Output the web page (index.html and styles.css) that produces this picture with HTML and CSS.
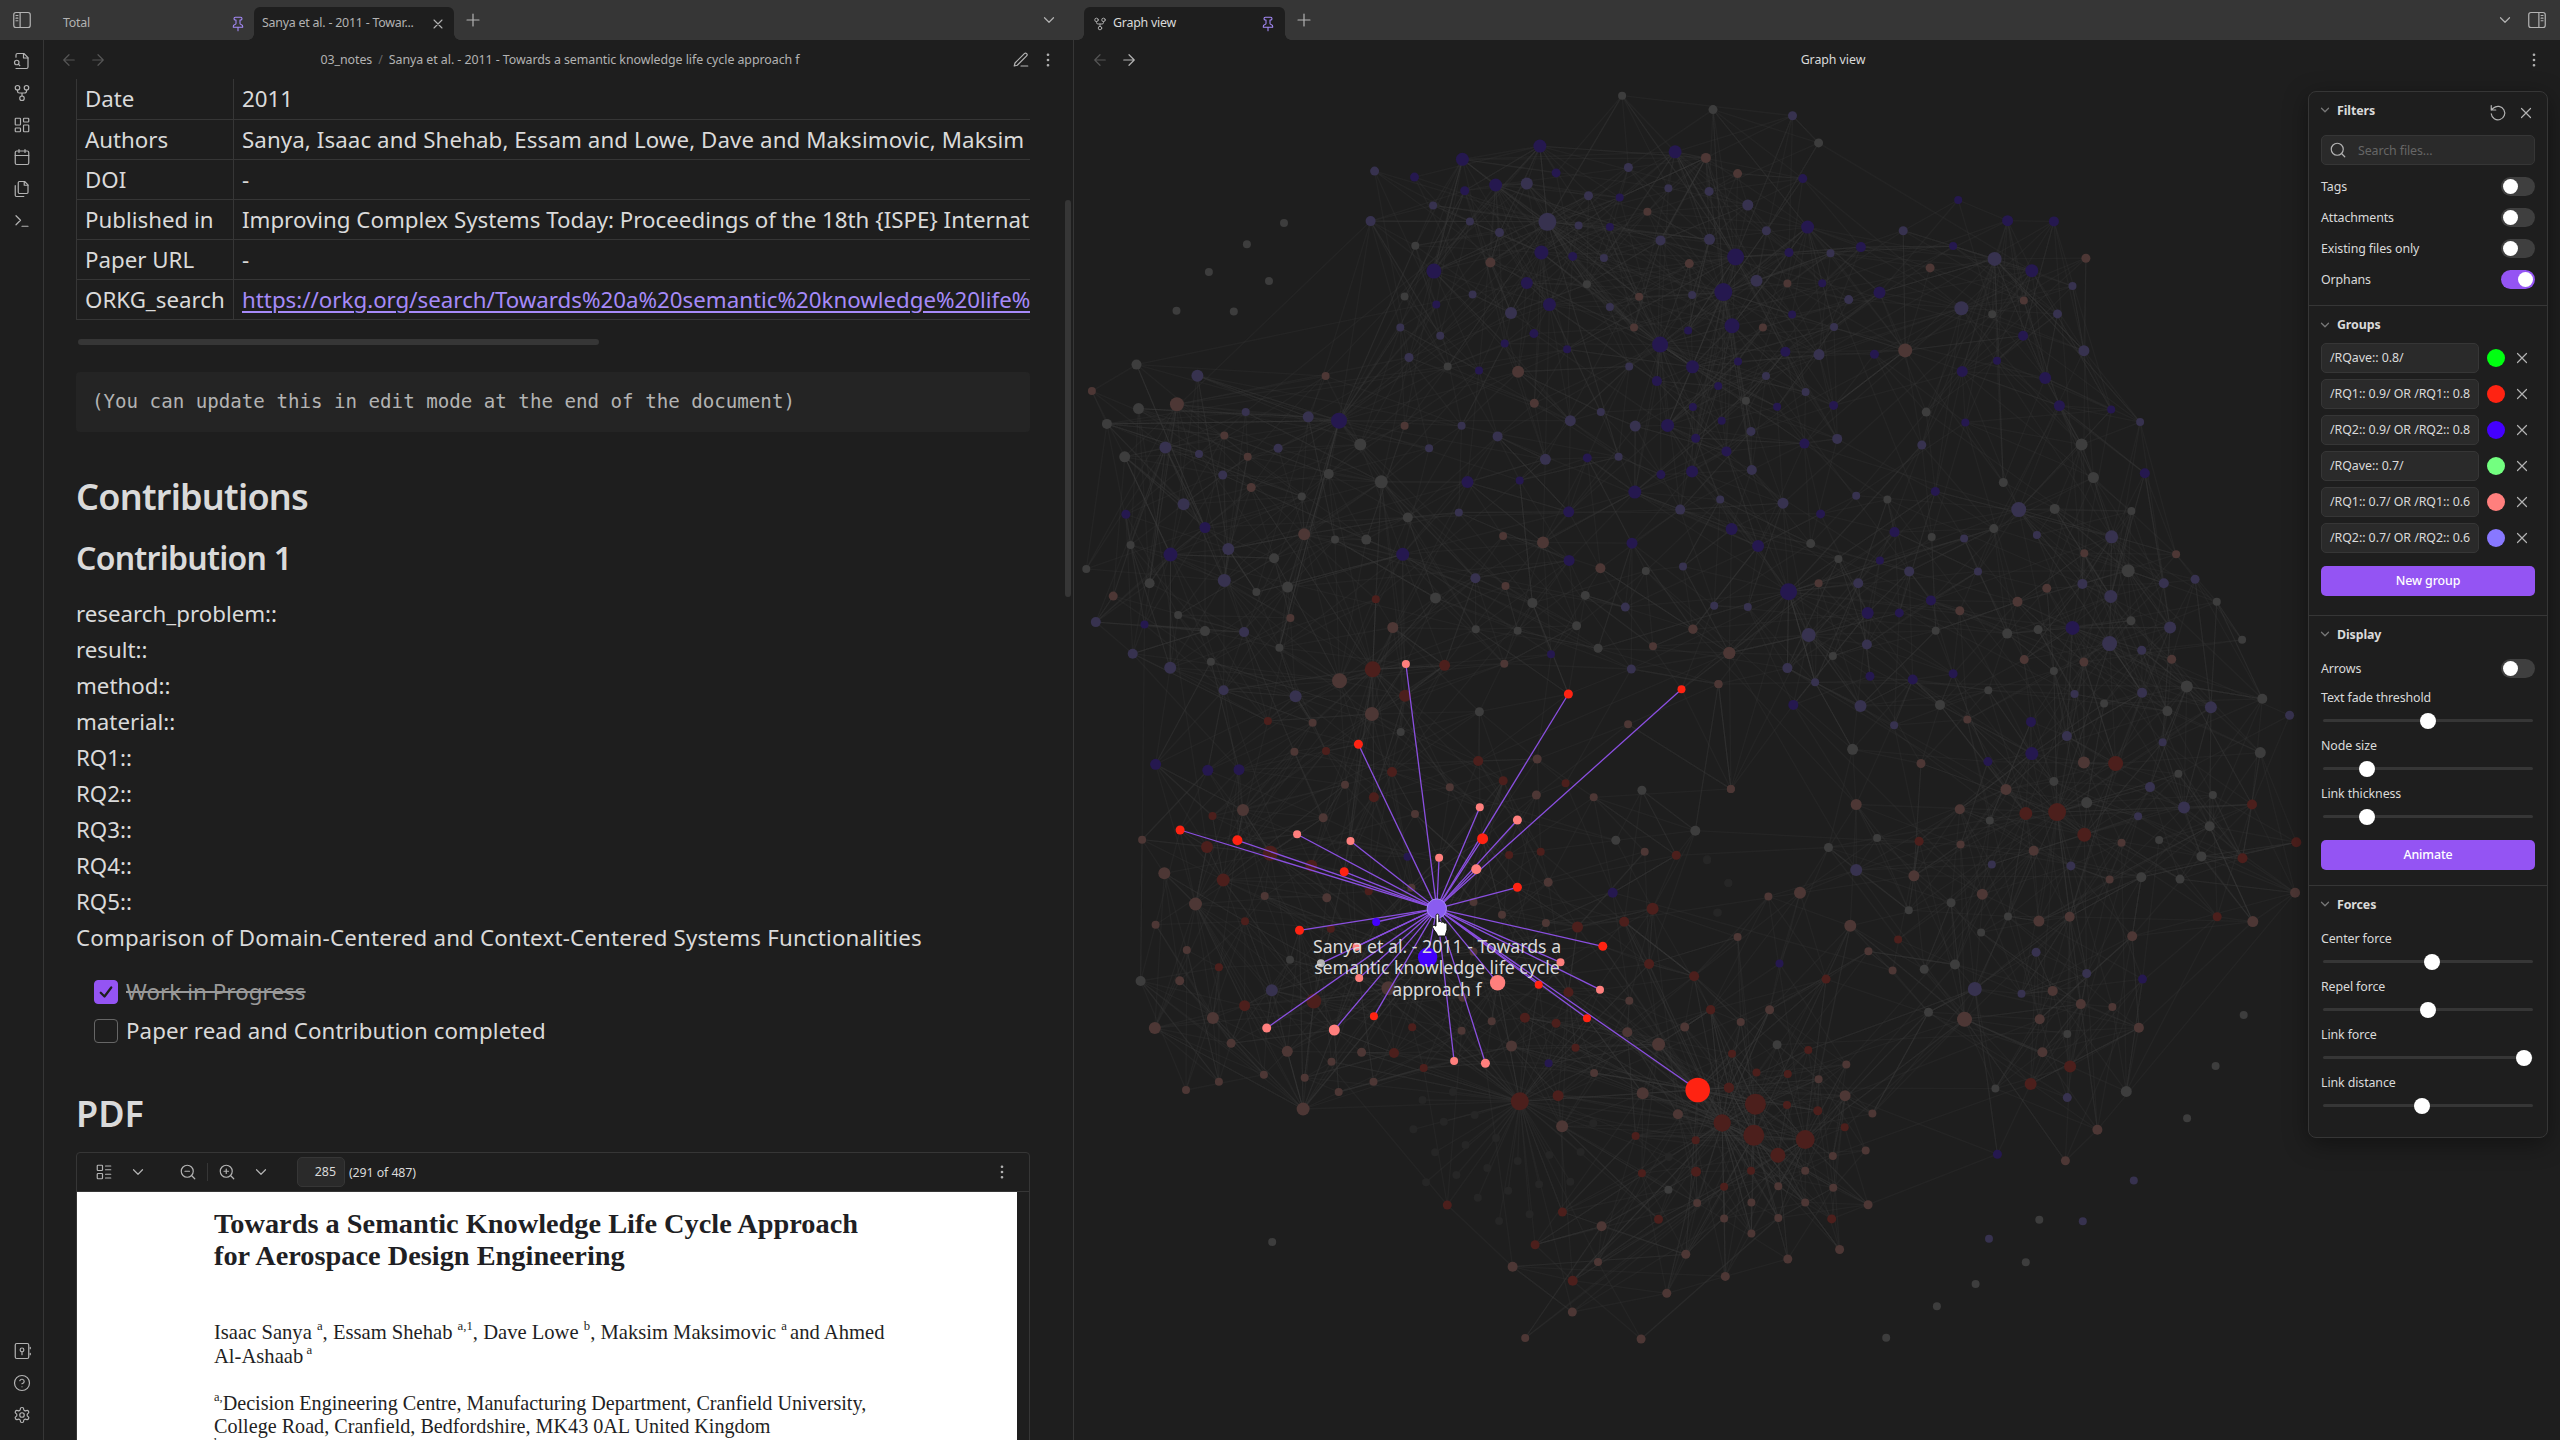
FILE: index.html
```
<!DOCTYPE html>
<html lang="en">
<head>
<meta charset="utf-8">
<title>Graph view</title>
<link rel="stylesheet" href="styles.css">
</head>
<body>
<svg class="sprite" width="0" height="0">
  <symbol id="i-left" viewBox="0 0 24 24"><rect x="1" y="2" width="22" height="20" rx="3"/><path d="M9.500 2v20M4 6h2.500M4 9.500h2.500M4 13h2.500"/></symbol>
  <symbol id="i-right" viewBox="0 0 24 24"><rect x="1" y="2" width="22" height="20" rx="3"/><path d="M14.500 2v20M17.500 6H20M17.500 9.500H20M17.500 13H20"/></symbol>
  <symbol id="i-filesearch" viewBox="0 0 24 24"><path d="M4 22h14a2 2 0 0 0 2-2V7.500L14.500 2H6a2 2 0 0 0-2 2v3"/><path d="M14 2v6h6M9 18l-1.500-1.500"/><circle cx="5" cy="14" r="3"/></symbol>
  <symbol id="i-fork" viewBox="0 0 24 24"><circle cx="12" cy="19" r="3"/><circle cx="6" cy="5" r="3"/><circle cx="18" cy="5" r="3"/><path d="M18 8v1.500a2.500 2.500 0 0 1-2.500 2.500h-7A2.500 2.500 0 0 1 6 9.500V8M12 12v4"/></symbol>
  <symbol id="i-dash" viewBox="0 0 24 24"><rect x="3" y="3" width="7" height="9" rx="1"/><rect x="14" y="3" width="7" height="5" rx="1"/><rect x="14" y="12" width="7" height="9" rx="1"/><rect x="3" y="16" width="7" height="5" rx="1"/></symbol>
  <symbol id="i-cal" viewBox="0 0 24 24"><rect x="3" y="4" width="18" height="18" rx="2"/><path d="M16 2v4M8 2v4M3 10h18"/></symbol>
  <symbol id="i-files" viewBox="0 0 24 24"><path d="M15.500 2H8.600C7.700 2 7 2.700 7 3.600v12.800c0 .9.7 1.600 1.600 1.600h9.800c.9 0 1.600-.7 1.600-1.600V6.500L15.500 2z"/><path d="M3 7.600v12.800c0 .9.7 1.600 1.600 1.600h9.800M15 2v5h5"/></symbol>
  <symbol id="i-term" viewBox="0 0 24 24"><path d="M4 17l6-6-6-6M12 19h8"/></symbol>
  <symbol id="i-vault" viewBox="0 0 24 24"><rect x="3" y="2" width="18" height="20" rx="2"/><circle cx="12" cy="10.500" r="2.500"/><path d="M12 13v4M23 7v2M23 15v2"/></symbol>
  <symbol id="i-help" viewBox="0 0 24 24"><circle cx="12" cy="12" r="10"/><path d="M9.090 9a3 3 0 0 1 5.830 1c0 2-3 3-3 3M12 17h.01"/></symbol>
  <symbol id="i-gear" viewBox="0 0 24 24"><path d="M12.220 2h-.44a2 2 0 0 0-2 2v.18a2 2 0 0 1-1 1.730l-.43.25a2 2 0 0 1-2 0l-.15-.08a2 2 0 0 0-2.730.73l-.22.38a2 2 0 0 0 .73 2.730l.15.1a2 2 0 0 1 1 1.720v.51a2 2 0 0 1-1 1.740l-.15.09a2 2 0 0 0-.73 2.730l.22.38a2 2 0 0 0 2.730.73l.15-.08a2 2 0 0 1 2 0l.43.25a2 2 0 0 1 1 1.730V20a2 2 0 0 0 2 2h.44a2 2 0 0 0 2-2v-.18a2 2 0 0 1 1-1.730l.43-.25a2 2 0 0 1 2 0l.15.08a2 2 0 0 0 2.730-.73l.22-.39a2 2 0 0 0-.73-2.730l-.15-.08a2 2 0 0 1-1-1.740v-.5a2 2 0 0 1 1-1.740l.15-.09a2 2 0 0 0 .73-2.730l-.22-.38a2 2 0 0 0-2.730-.73l-.15.08a2 2 0 0 1-2 0l-.43-.25a2 2 0 0 1-1-1.730V4a2 2 0 0 0-2-2z"/><circle cx="12" cy="12" r="3"/></symbol>
  <symbol id="i-pin" viewBox="0 0 24 24"><path d="M12 17v5M5 17h14v-1.760a2 2 0 0 0-1.110-1.790l-1.780-.9A2 2 0 0 1 15 10.760V6h1a2 2 0 0 0 0-4H8a2 2 0 0 0 0 4h1v4.760a2 2 0 0 1-1.110 1.790l-1.780.9A2 2 0 0 0 5 15.240Z"/></symbol>
  <symbol id="i-x" viewBox="0 0 24 24"><path d="M18 6L6 18M6 6l12 12"/></symbol>
  <symbol id="i-plus" viewBox="0 0 24 24"><path d="M12 4v16M4 12h16"/></symbol>
  <symbol id="i-chev" viewBox="0 0 24 24"><path d="M6 9l6 6 6-6"/></symbol>
  <symbol id="i-back" viewBox="0 0 24 24"><path d="M19 12H5M12 19l-7-7 7-7"/></symbol>
  <symbol id="i-fwd" viewBox="0 0 24 24"><path d="M5 12h14M12 5l7 7-7 7"/></symbol>
  <symbol id="i-edit" viewBox="0 0 24 24"><path d="M12 20h9M16.500 3.500a2.120 2.120 0 0 1 3 3L7 19l-4 1 1-4Z"/></symbol>
  <symbol id="i-dots" viewBox="0 0 24 24"><circle cx="12" cy="5" r="1"/><circle cx="12" cy="12" r="1"/><circle cx="12" cy="19" r="1"/></symbol>
  <symbol id="i-reset" viewBox="0 0 24 24"><path d="M3 2v6h6M3 13a9 9 0 1 0 3-7.700L3 8"/></symbol>
  <symbol id="i-search" viewBox="0 0 24 24"><circle cx="11" cy="11" r="8"/><path d="M21 21l-4.300-4.300"/></symbol>
  <symbol id="i-zoomin" viewBox="0 0 24 24"><circle cx="11" cy="11" r="8"/><path d="M21 21l-4.300-4.300M11 8v6M8 11h6"/></symbol>
  <symbol id="i-zoomout" viewBox="0 0 24 24"><circle cx="11" cy="11" r="8"/><path d="M21 21l-4.300-4.300M8 11h6"/></symbol>
  <symbol id="i-list" viewBox="0 0 24 24"><rect x="3" y="3" width="7" height="7" rx="1"/><rect x="3" y="14" width="7" height="7" rx="1"/><path d="M14 4h7M14 9h7M14 15h7M14 20h7"/></symbol>
  <symbol id="i-check" viewBox="0 0 24 24"><path d="M5 13l5 5L19 6"/></symbol>
</svg>

<header class="titlebar">
  <div class="tabs tabs-left">
    <div class="corner"><svg class="ic s18"><use href="#i-left"/></svg></div>
    <div class="tab tab-first"><span>Total</span><svg class="ic s16 accent"><use href="#i-pin"/></svg></div>
    <div class="tab active"><span>Sanya et al. - 2011 - Towar...</span><svg class="ic s16"><use href="#i-x"/></svg></div>
    <svg class="ic s18 plus"><use href="#i-plus"/></svg>
    <svg class="ic s18 tab-menu"><use href="#i-chev"/></svg>
  </div>
  <div class="tabs tabs-right">
    <div class="tab active graph-tab"><svg class="ic s14"><use href="#i-fork"/></svg><span class="bright">Graph view</span><svg class="ic s16 accent"><use href="#i-pin"/></svg></div>
    <svg class="ic s18 plus"><use href="#i-plus"/></svg>
    <svg class="ic s18 tab-menu"><use href="#i-chev"/></svg>
    <svg class="ic s18"><use href="#i-right"/></svg>
  </div>
</header>

<div class="workspace">
  <nav class="ribbon">
    <svg class="ic s18"><use href="#i-filesearch"/></svg>
    <svg class="ic s18"><use href="#i-fork"/></svg>
    <svg class="ic s18"><use href="#i-dash"/></svg>
    <svg class="ic s18"><use href="#i-cal"/></svg>
    <svg class="ic s18"><use href="#i-files"/></svg>
    <svg class="ic s18"><use href="#i-term"/></svg>
    <div class="spacer"></div>
    <svg class="ic s18"><use href="#i-vault"/></svg>
    <svg class="ic s18"><use href="#i-help"/></svg>
    <svg class="ic s18"><use href="#i-gear"/></svg>
  </nav>

  <section class="pane note-pane">
    <div class="view-header">
      <div class="nav"><svg class="ic s18 dim"><use href="#i-back"/></svg><svg class="ic s18 dim"><use href="#i-fwd"/></svg></div>
      <div class="crumbs"><span>03_notes</span><span class="slash">/</span><span>Sanya et al. - 2011 - Towards a semantic knowledge life cycle approach f</span></div>
      <div class="actions"><svg class="ic s18"><use href="#i-edit"/></svg><svg class="ic s18"><use href="#i-dots"/></svg></div>
    </div>
    <div class="note">
      <div class="table-wrap">
        <table class="meta">
          <tr><td>Date</td><td>2011</td></tr>
          <tr><td>Authors</td><td class="authors">Sanya, Isaac and Shehab, Essam and Lowe, Dave and Maksimovic, Maksim and Al-Ashaab, Ahmed</td></tr>
          <tr><td>DOI</td><td>-</td></tr>
          <tr><td>Published in</td><td>Improving Complex Systems Today: Proceedings of the 18th {ISPE} International Conference</td></tr>
          <tr><td>Paper URL</td><td>-</td></tr>
          <tr><td>ORKG_search</td><td><a>https://orkg.org/search/Towards%20a%20semantic%20knowledge%20life%20cycle</a></td></tr>
        </table>
      </div>
      <div class="hscroll"></div>
      <pre class="code">(You can update this in edit mode at the end of the document)</pre>
      <h1 class="h-contribs">Contributions</h1>
      <h2 class="h-contrib">Contribution 1</h2>
      <div class="fields">
        <div>research_problem::</div><div>result::</div><div>method::</div><div>material::</div>
        <div>RQ1::</div><div>RQ2::</div><div>RQ3::</div><div>RQ4::</div><div>RQ5::</div>
        <div class="comparison">Comparison of Domain-Centered and Context-Centered Systems Functionalities</div>
      </div>
      <div class="tasks">
        <div class="task done"><span class="box checked"><svg class="ic s18 tick"><use href="#i-check"/></svg></span><s>Work in Progress</s></div>
        <div class="task"><span class="box"></span><span>Paper read and Contribution completed</span></div>
      </div>
      <h1 class="h-pdf">PDF</h1>
      <div class="pdf">
        <div class="pdf-bar">
          <svg class="ic s18 b1"><use href="#i-list"/></svg>
          <svg class="ic s18 b2"><use href="#i-chev"/></svg>
          <svg class="ic s18 b3"><use href="#i-zoomout"/></svg>
          <span class="sep"></span>
          <svg class="ic s18 b4"><use href="#i-zoomin"/></svg>
          <svg class="ic s18 b5"><use href="#i-chev"/></svg>
          <span class="page-no">285</span>
          <span class="page-of">(291 of 487)</span>
          <svg class="ic s18 b6"><use href="#i-dots"/></svg>
        </div>
        <div class="sheet">
          <div class="sheet-title">Towards a Semantic Knowledge Life Cycle Approach<br>for Aerospace Design Engineering</div>
          <div class="sheet-authors">Isaac Sanya <sup>a</sup>, Essam Shehab <sup>a,1</sup>, Dave Lowe <sup>b</sup>, Maksim Maksimovic <sup>a </sup>and Ahmed<br>Al-Ashaab<sup> a</sup></div>
          <div class="sheet-affil"><sup>a,</sup>Decision Engineering Centre, Manufacturing Department, Cranfield University,<br>College Road, Cranfield, Bedfordshire, MK43 0AL United Kingdom<br><sup>b</sup></div>
        </div>
      </div>
      <div class="vscroll"></div>
    </div>
  </section>

  <section class="pane graph-pane">
    <div class="view-header">
      <div class="nav"><svg class="ic s18 dim"><use href="#i-back"/></svg><svg class="ic s18"><use href="#i-fwd"/></svg></div>
      <div class="crumbs title">Graph view</div>
      <div class="actions"><svg class="ic s18"><use href="#i-dots"/></svg></div>
    </div>
    <svg class="graph" id="graph" viewBox="1074 80 1486 1360"></svg>
    <div class="node-label">Sanya et al. - 2011 - Towards a<br>semantic knowledge life cycle<br>approach f</div>
    <svg class="cursor" viewBox="0 0 18 24"><path d="M5 13V2.500C5 .6 7.800.6 7.800 2.500V9c.6-1 2.600-.8 2.800.4.8-.8 2.500-.4 2.700.8 1-.6 2.700 0 2.700 1.600v4.700c0 2-1.500 3-1.500 6.500H6.500C6.500 20 3 18 1.600 14.300 1 12.600 3.200 11.600 4.200 13z" fill="#fff" stroke="#111"/></svg>

    <aside class="controls">
      <section class="group g-filters">
        <div class="g-head"><svg class="ic s14 dim2"><use href="#i-chev"/></svg><b>Filters</b><span class="grow"></span><svg class="ic s18 reset"><use href="#i-reset"/></svg><svg class="ic s18 close"><use href="#i-x"/></svg></div>
        <div class="search"><svg class="ic s18"><use href="#i-search"/></svg><span>Search files...</span></div>
        <div class="opt"><span>Tags</span><i class="toggle"></i></div>
        <div class="opt"><span>Attachments</span><i class="toggle"></i></div>
        <div class="opt"><span>Existing files only</span><i class="toggle"></i></div>
        <div class="opt"><span>Orphans</span><i class="toggle on"></i></div>
      </section>
      <section class="group g-groups">
        <div class="g-head"><svg class="ic s14 dim2"><use href="#i-chev"/></svg><b>Groups</b></div>
        <div class="query"><span class="field">/RQave:: 0.8/</span><i class="dot lime"></i><svg class="ic s18"><use href="#i-x"/></svg></div>
        <div class="query"><span class="field">/RQ1:: 0.9/ OR /RQ1:: 0.8</span><i class="dot red"></i><svg class="ic s18"><use href="#i-x"/></svg></div>
        <div class="query"><span class="field">/RQ2:: 0.9/ OR /RQ2:: 0.8</span><i class="dot blue"></i><svg class="ic s18"><use href="#i-x"/></svg></div>
        <div class="query"><span class="field">/RQave:: 0.7/</span><i class="dot mint"></i><svg class="ic s18"><use href="#i-x"/></svg></div>
        <div class="query"><span class="field">/RQ1:: 0.7/ OR /RQ1:: 0.6</span><i class="dot pink"></i><svg class="ic s18"><use href="#i-x"/></svg></div>
        <div class="query"><span class="field">/RQ2:: 0.7/ OR /RQ2:: 0.6</span><i class="dot lilac"></i><svg class="ic s18"><use href="#i-x"/></svg></div>
        <div class="btn">New group</div>
      </section>
      <section class="group g-display">
        <div class="g-head"><svg class="ic s14 dim2"><use href="#i-chev"/></svg><b>Display</b></div>
        <div class="opt"><span>Arrows</span><i class="toggle"></i></div>
        <div class="slider"><span>Text fade threshold</span><div class="track"><i style="left:105px"></i></div></div>
        <div class="slider"><span>Node size</span><div class="track"><i style="left:44px"></i></div></div>
        <div class="slider"><span>Link thickness</span><div class="track"><i style="left:44px"></i></div></div>
        <div class="btn">Animate</div>
      </section>
      <section class="group g-forces">
        <div class="g-head"><svg class="ic s14 dim2"><use href="#i-chev"/></svg><b>Forces</b></div>
        <div class="slider"><span>Center force</span><div class="track"><i style="left:109px"></i></div></div>
        <div class="slider"><span>Repel force</span><div class="track"><i style="left:105px"></i></div></div>
        <div class="slider"><span>Link force</span><div class="track"><i style="left:201px"></i></div></div>
        <div class="slider"><span>Link distance</span><div class="track"><i style="left:99px"></i></div></div>
      </section>
    </aside>
  </section>
</div>
<script src="graph.js"></script>
</body>
</html>
```
FILE: styles.css
```
* { box-sizing: border-box; }
body {
  margin: 0; width: 2560px; height: 1440px; overflow: hidden;
  background: #1e1e1e; color: #dadada;
  font-family: "Noto Sans", "Open Sans", sans-serif; font-size: 12.4px;
  display: flex; flex-direction: column;
}
.sprite { position: absolute; }
.ic { fill: none; stroke: #b3b3b3; stroke-width: 1.6; stroke-linecap: round; stroke-linejoin: round; flex: none; display: block; }
.s14 { width: 14px; height: 14px; }
.s16 { width: 16px; height: 16px; }
.s18 { width: 18px; height: 18px; }
.dim { stroke: #555; }
.dim2 { stroke: #777; stroke-width: 2.2; }
.accent { stroke: #a68af9; }
.spacer, .grow { flex: 1; }

/* tab bar */
.titlebar { height: 40px; flex: none; background: #363636; display: flex; }
.tabs { display: flex; align-items: center; }
.tabs-left { width: 1074px; padding-right: 16px; }
.tabs-right { flex: 1; padding: 0 14px 0 10px; }
.corner { width: 44px; display: flex; justify-content: center; }
.tab { position: relative; width: 200px; height: 33px; margin-top: 7px; padding: 0 8px; display: flex; align-items: center; justify-content: space-between; color: #b3b3b3; white-space: nowrap; }
.tab span { padding-bottom: 2px; letter-spacing: -0.220px; }
.tab-first { width: 210px; padding: 0 8px 0 19px; }
.tab.active { background: #1e1e1e; border-radius: 6px 6px 0 0; }
.tab.active::before, .tab.active::after { content: ""; position: absolute; bottom: 0; width: 6px; height: 6px; }
.tab.active::before { left: -6px; background: radial-gradient(circle at 0 0, transparent 5.500px, #1e1e1e 6px); }
.tab.active::after { right: -6px; background: radial-gradient(circle at 100% 0, transparent 5.500px, #1e1e1e 6px); }
.graph-tab { width: 201px; padding: 0 9px; }
.graph-tab span { flex: 1; margin-left: 6px; }
.bright { color: #dadada; }
.plus { margin-left: 10px; }
.tab-menu { margin-left: auto; }
.tabs-right .tab-menu { margin-right: 14px; }

.workspace { flex: 1; display: flex; min-height: 0; }
.ribbon { width: 44px; border-right: 1px solid #363636; padding: 12px 0 16px; display: flex; flex-direction: column; align-items: center; gap: 14px; }
.pane { position: relative; display: flex; flex-direction: column; min-height: 0; }
.note-pane { width: 1030px; border-right: 1px solid #363636; }
.graph-pane { flex: 1; }
.view-header { height: 39px; flex: none; display: grid; grid-template-columns: 91px 1fr 88px; align-items: center; padding: 0 16px; }
.graph-pane .view-header { grid-template-columns: 90px 1fr 58px; padding: 0 17px; }
.nav { display: flex; gap: 11px; }
.actions { display: flex; gap: 9px; justify-content: flex-end; }
.crumbs { text-align: center; color: #b3b3b3; letter-spacing: -0.060px; }
.slash { color: #666; margin: 0 6px; }
.title { color: #dadada; }

/* note */
.note { position: relative; flex: 1; min-height: 0; overflow: hidden; padding-left: 32px; font-size: 22.3px; display: flex; flex-direction: column; }
.note > * { flex: none; width: 954px; }
.table-wrap { overflow: hidden; height: 241px; }
.meta { border-collapse: collapse; table-layout: fixed; width: 1400px; }
.meta td { height: 40px; padding: 1px 8px 0; line-height: 38px; border: 1px solid #363636; border-top: 0; white-space: nowrap; }
.meta td:first-child { width: 157px; }
.meta .authors { letter-spacing: .09px; }
.meta a { color: #a68af9; text-decoration: underline; text-decoration-thickness: 2px; text-underline-offset: 3px; }
.note .hscroll { width: 521px; height: 6px; border-radius: 3px; background: #363636; margin: 19px 0 27px 2px; }
.code { margin: 0; height: 60px; line-height: 60px; padding-left: 16px; background: #242424; border-radius: 4px; color: #b3b3b3; font-family: "DejaVu Sans Mono", monospace; font-size: 19.150px; }
h1, h2 { margin: 0; font-weight: 600; line-height: 50px; }
.h-contribs { font-size: 36px; margin-top: 40px; letter-spacing: -0.750px; }
.h-contrib { font-size: 32px; margin-top: 11px; letter-spacing: -0.750px; }
.fields { margin-top: 13px; line-height: 36px; }
.comparison { letter-spacing: .18px; }
.tasks { margin-top: 16px; padding-left: 18px; }
.task { height: 39px; display: flex; align-items: center; gap: 8px; letter-spacing: .09px; }
.task.done { color: #999; }
.box { width: 24px; height: 24px; border: 1px solid #666; border-radius: 4px; display: flex; align-items: center; justify-content: center; }
.checked { background: #9454f3; border-color: #9454f3; }
.tick { stroke: #1e1e1e; stroke-width: 3; }
.h-pdf { font-size: 36px; margin-top: 39px; }
.vscroll { position: absolute; left: 1021px; top: 121px; height: 397px; border-radius: 3px; background: #363636; }
.note .vscroll { width: 6px; }

.pdf { margin-top: 13px; height: 330px; border: 1px solid #363636; border-radius: 4px 4px 0 0; overflow: hidden; }
.pdf-bar { height: 39px; border-bottom: 1px solid #363636; display: flex; align-items: center; font-size: 12.4px; padding: 0 18px; }
.b2 { margin-left: 16px; }
.b3 { margin-left: 32px; }
.sep { width: 1px; height: 18px; background: #363636; margin: 0 10px; }
.b5 { margin-left: 16px; }
.page-no { width: 48px; height: 30px; line-height: 28px; border: 1px solid #363636; border-radius: 5px; background: #2a2a2a; text-align: right; padding-right: 8px; margin-left: 27px; }
.page-of { margin-left: 4px; letter-spacing: -0.100px; }
.b6 { margin-left: auto; }
.sheet { width: 940px; height: 300px; background: #fff; color: #1f1f24; padding-left: 137px; font-family: "Liberation Serif", serif; white-space: nowrap; }
.sheet-title { padding-top: 16px; font-weight: 700; font-size: 28.350px; line-height: 32px; }
.sheet-authors { margin-top: 48px; font-size: 20.600px; line-height: 24px; }
.sheet-affil { margin-top: 24px; font-size: 20.150px; line-height: 23px; }
sup { font-size: 62%; line-height: 0; vertical-align: 9px; }

/* graph */
.graph { flex: 1; width: 1486px; height: 1360px; margin-top: 1px; }
.ln { stroke: #3c3c3c; stroke-opacity: .24; stroke-width: 1.300; }
.hot { stroke: #8a4fe0; stroke-width: 1.300; }
.node-label { position: absolute; left: 213px; top: 896px; width: 300px; text-align: center; font-size: 17.700px; line-height: 21.300px; }
.cursor { position: absolute; left: 357px; top: 873px; width: 18px; height: 24px; }

/* controls */
.controls { position: absolute; left: 1234px; top: 51px; width: 240px; height: 1047px; border: 1px solid #363636; border-radius: 8px; background: #1e1e1e; box-shadow: 0 6px 24px rgba(0,0,0,.4); letter-spacing: -0.100px; }
.group { padding: 0 12px; border-bottom: 1px solid #363636; }
.group:last-child { border-bottom: 0; }
.g-head { display: flex; align-items: center; gap: 5px; height: 38px; margin-left: -3px; padding-bottom: 2px; }
.g-head .s18 { margin-top: 5px; }
.g-head .reset { margin-right: 5px; }
.g-filters { height: 214px; }
.search { height: 30px; margin: 5px 0 6px; background: #2a2a2a; border: 1px solid #363636; border-radius: 5px; display: flex; align-items: center; gap: 11px; padding-left: 7px; color: #666; }
.opt { height: 31px; display: flex; align-items: center; justify-content: space-between; }
.toggle { width: 34px; height: 19px; border-radius: 10px; background: #3f3f3f; display: flex; align-items: center; padding: 0 2px; }
.toggle::before { content: ""; width: 15px; height: 15px; border-radius: 50%; background: #fff; }
.toggle.on { background: #9454f3; justify-content: flex-end; }
.g-groups { height: 310px; }
.g-groups .g-head { height: 37px; padding-bottom: 0; }
.query { height: 30px; margin-bottom: 6px; display: flex; align-items: center; }
.field { width: 158px; height: 30px; line-height: 28px; background: #2a2a2a; border: 1px solid #363636; border-radius: 5px; padding-left: 8px; white-space: nowrap; letter-spacing: -0.050px; }
.dot { width: 18px; height: 18px; border-radius: 50%; margin: 0 8px; }
.lime { background: #0f1; } .red { background: #ff2312; } .blue { background: #40f; }
.mint { background: #73ff80; } .pink { background: #ff7f7d; } .lilac { background: #8878ff; }
.btn { height: 30px; line-height: 29px; border-radius: 5px; background: #9454f3; color: #fff; text-align: center; font-weight: 500; margin-top: 13px; }
.g-display { height: 270px; }
.g-display .opt { height: 29px; }
.slider { height: 48px; }
.slider span { display: block; height: 36px; line-height: 29px; }
.track { position: relative; width: 210px; height: 3px; margin-left: 2px; border-radius: 2px; background: #363636; }
.track i { position: absolute; top: -6px; width: 16px; height: 16px; margin-left: -8px; border-radius: 50%; background: #fff; }
.g-display .btn { margin-top: 13px; }
```
FILE: graph.js
```
// Node data is kept per tile: x,y,r triples in the tile's own units, grouped by colour.
const COLORS = { g: '#3d3d3d', k: '#262626', b: '#25184f', l: '#37324f', r: '#4c1f1c', p: '#4d3735' };
const TILES = [
  { x: 1080, y: 80, sx: 2.529, sy: 2.8, n: {
    g: '1371,44,4 848,464,4 821,606,4 1282,572,4 930,802,4 143,797,5 148,920,5.5 68,963,5 113,1055,5.5 709,1021,6 762,1125,6.5 629,1103,5 561,1166,4 829,1225,5 724,1287,5 645,1287,4 491,1339,5 525,1420,5.5 446,1434,4 128,1302,4 16,1369,4 176,1409,5 248,1498,4 316,1543,5 899,1450,5.5 1144,1464,5 1001,1538,4 1107,1542,4 1278,1443,4.5 1256,1528,4.5 1431,1375,4',
    b: '967,222,6.5 1163,185,6.5 1505,201,6.5 846,272,4.5 973,310,4.5 1051,294,6.5 1204,260,4.5 1365,329,4 1340,412,4 895,535,7.5 1167,483,7 1130,568,6 1246,494,4.5 901,629,4 1187,629,6.5 1148,710,4.5 1074,738,4 1232,754,4 1009,813,4 1467,741,8 1538,701,4 1549,803,6.5 1459,843,5 1550,916,4 1486,967,6.5 1557,1003,4.5 655,954,8 980,1126,6 1112,1121,4 1283,1058,4.5 1469,1105,4.5 1548,1096,6 1403,1154,6.5 1236,1209,5.5 1237,1345,5.5 1396,1297,5.500 816,1328,6.5 116,1216,4.5 316,1253,5.5 229,1329,7 163,1525,4',
    l: '745,255,4.5 735,395,5 893,351,4 1130,290,6 1387,245,4.5 1488,303,4 1286,324,4.5 986,396,4 1061,427,4.5 1182,397,9 1261,407,4 1468,449,5 1325,498,4 993,601,4 1090,652,6 1340,636,4 1548,602,4 810,693,4 911,716,4 832,777,4.5 297,828,6 419,930,4 577,943,5.5 216,1029,6 301,1047,4 501,1031,4.5 361,1106,4.5 262,1188,6 965,968,4 1056,998,5 883,1031,4 1240,954,5.5 1317,930,4 1404,969,5.5 1389,802,4 1177,1062,5.5 1362,1055,4 958,1211,4 375,1313,6 365,1401,6.5 1000,1395,5 1518,1203,5 1525,1362,4 1379,1476,4.5 40,1518,5 415,1546,5',
    p: '1435,369,4 1038,511,5 1541,514,4.5 1414,607,4 1401,693,4 1108,817,6 1149,905,4.5 621,829,4 30,871,4 245,908,7 365,995,4 424,1055,4 433,1141,4.5 821,968,4 567,1272,6 1070,1277,4 1171,1295,6 1076,1417,4 1316,1367,5 532,1506,4 84,1445,4.5 791,1533,5.500 1550,1538,4.5',
    r: '748,1454,4' } },
  { x: 1700, y: 80, sx: 2.529, sy: 2.8, n: {
    g: '33,83,4.5 300,176,4.5 739,656,4 116,898,4 572,930,4.5 767,1127,4.5 965,1021,6 995,1113,5.5 897,1201,5 1091,1207,4 474,1175,4 743,1256,4.5 586,1280,4 280,1298,4.5 350,1341,4 1083,1374,6.5 1307,1461,4 1090,1514,4.5 596,1542,4 777,1550,5 855,1539,4.5',
    b: '260,276,4.5 272,412,6.5 407,468,5 653,336,4 778,394,5.500 895,396,5 640,465,4 90,496,8.5 225,483,4.5 59,594,9 309,569,4 454,595,6 233,657,4 81,688,7.5 839,534,6.5 817,716,5 96,788,4 216,761,5 441,768,4.500 751,786,4 663,816,5.5 46,857,4 195,915,4 338,911,4.500 873,834,6 909,912,5.500 1040,923,4 671,959,4 55,954,4 67,1040,5 264,1018,5 305,1215,4.5 595,1152,4.5 1125,1101,5 492,1266,5 80,1257,6 147,1305,6 455,1345,4 584,1457,5 224,1433,8.5 424,1492,6 504,1492,4.500 942,1534,7',
    l: '234,100,4.5 23,312,4.500 121,350,5.5 24,446,5.5 168,422,4.5 330,485,4 514,422,4.5 143,562,6 376,615,4.5 339,692,4 745,501,7 942,577,4 661,639,7 904,655,4.5 301,769,5.500 971,758,5.5 167,829,4 267,874,4 1113,958,4 129,984,4.5 347,1005,5 561,1022,4.500 131,1092,5 51,1175,4 210,1185,5.5 395,1164,4 806,1203,7.5 1041,1279,6.5 852,1274,4 668,1284,4 529,1376,5 703,1376,4 400,1409,5 967,1411,5 1173,1409,5 1252,1398,4.5 1039,1446,6.500 1189,1533,6 36,1472,4 121,1476,4 275,1554,7',
    p: '15,218,5 95,262,4.5 582,526,4.500 221,570,4 976,499,4.5 819,617,4 159,693,4 519,757,7 972,1325,4 1204,1328,4 877,1423,4.500 803,1461,5 300,1409,4 657,1486,4.5' } },
  { x: 1120, y: 620, sx: 2.529, sy: 3, n: {
    g: '403,83,4 230,125,4 1209,85,4.5 909,275,4.5 710,336,4 1320,511,4.5 1455,632,5 1254,661,4.5 430,1019,4 52,1083,5',
    k: '1485,718,4 1538,789,4 1510,878,4 842,1416,4 765,1440,4 897,1485,4 819,1505,4 742,1528,4 1197,1510,4',
    b: '1090,103,4 90,433,5.5 222,451,5.5 301,449,5.5 727,710,4 1246,818,5 1084,1330,4',
    l: '32,101,5 127,143,6 262,211,5 444,229,6 1293,147,4.5 384,1111,6',
    r: '639,148,8 821,136,5.5 721,227,6 374,303,4 521,393,4 688,456,5 906,423,5 969,482,4.5 1127,490,4 642,532,5 234,588,4 220,681,6 261,780,6.5 380,700,7.500 484,737,6 629,814,4 316,904,4 533,926,4 250,1042,4 490,1143,7.5 315,1157,5.500 1064,695,4 984,705,4 1407,706,4.500 1347,866,6 1275,905,5 1157,921,5.5 1338,1032,5 1452,1069,5 1494,1169,4.5 1134,1117,5 1024,1193,5 1103,1210,4.5 739,1222,4 693,1299,5 768,1344,4 1152,1283,4 1011,1444,9 1108,1427,5.5 1540,1403,5 1523,1509,8.500 1304,1548,4',
    p: '1348,79,4 1541,99,6 972,131,4 1513,192,4 1449,27,4.5 555,182,7.5 637,282,7 487,308,4 1285,313,4 441,395,4 569,494,4 834,502,4 1055,417,4.5 1053,525,4.5 1198,532,4 1545,507,4 311,570,6 514,593,4.500 746,582,4 56,659,4 112,760,6 191,852,6.5 366,828,4 523,833,4.5 90,914,4 169,990,4 151,1082,4.500 88,1224,6 235,1194,6 281,1270,4.500 250,1385,4 167,1410,4 364,1364,4 423,1294,5.500 467,1373,4 535,1325,4 611,1297,4.5 463,1467,6.5 553,1416,4 641,1385,4 737,803,4 894,846,4 966,884,4 894,995,4 1083,787,4.500 1327,695,4 1077,909,4 679,1105,7 867,1132,4.500 864,1232,4 940,1204,4 990,1278,5.500 1288,1142,4 1283,1237,5 1362,1273,6.5 1428,1221,4.500 1322,1420,6 1199,1359,4 1411,1483,5 1118,1519,6' } },
  { x: 1700, y: 620, sx: 2.529, sy: 2.119, n: {
    g: '1371,42,4 336,76,4 895,108,4 729,149,4 607,180,5 1022,177,4 1231,141,6 1182,193,5 1422,167,5 1417,281,5.5 386,274,5.500 895,342,4.5 978,387,5.5 1210,326,4 1297,371,4 733,425,4 448,462,4 325,482,4.5 1289,437,5 1161,466,4 1116,545,5 1214,549,4.5 1268,501,5 635,599,4.500 528,615,4 779,628,4 711,662,4 645,730,5 567,740,4.5 578,831,4.5 195,900,4.5 929,877,4 747,993,4 1078,999,5.5',
    k: '18,509,4 72,557,4 45,620,4',
    b: '430,119,4.500 538,126,5 640,114,4.5 236,180,5 837,216,5 839,283,6.5 728,300,4.500 201,728,4 1119,761,4.5 752,1132,4.5',
    l: '1036,50,7.5 422,52,5 1117,64,4.5 221,102,5 291,132,4 406,182,6 947,157,4 1118,154,5 1292,185,6 1491,202,4.5 491,223,4 928,246,5 1170,259,4 1138,354,5 1224,397,6 1108,416,4 738,518,4 938,521,4.5 395,530,6 850,704,4.500 978,749,4.5 695,782,7 813,792,4 929,1012,4.5',
    p: '74,70,6 820,84,4.500 971,89,4.5 1193,83,4.500 47,136,4 676,211,4 559,304,4.5 78,358,4 971,302,6 774,359,5.500 395,391,5.500 657,401,5 659,476,4 844,489,5 1066,472,4 541,542,5.5 714,581,5.5 1036,550,4 253,578,6 173,586,4 380,648,6 857,638,5.500 935,629,5 95,672,4 426,702,4 487,743,4 1093,670,5 892,786,5 963,814,5 1043,820,4 669,846,7.5 859,846,5 1110,864,5 866,916,5 176,826,4.500 103,852,4 370,942,4 300,973,4 367,1008,5.5 436,1046,4 419,1124,4 336,1136,4 266,1167,4 337,1203,4 198,1200,4 130,1234,4 266,1234,4 425,1239,4.500 61,1268,4 198,1267,4 130,1300,4 353,1334,4.500 222,1354,4.500 64,1391,4.500 1005,1080,5 924,1146,4.500 1505,578,5 1398,639,5.5',
    r: '1051,304,7.5 903,407,9 824,410,6.5 972,455,7 1396,391,5 1508,471,5 1372,505,5 1308,629,4.5 554,469,4.5 501,677,4 319,761,4.500 27,826,4.500 936,946,6 836,983,6 81,919,4 274,911,4 143,959,4 222,962,4 73,991,5 140,1026,10.5 56,1066,8.5 220,1028,4 298,1040,4.500 136,1092,10.5 266,1101,9.5 366,1075,4 197,1134,7.5 129,1167,4 61,1201,4 333,1269,4.500' } },
  { x: 1080, y: 900, sx: 2.529, sy: 3, n: {
    g: '1488,869,4',
    k: '975,735,4 1052,714,4 898,757,4 1187,765,4 1107,783,4 1266,756,4 1030,804,4 952,825,4 875,847,4 1161,853,4 1083,872,4 1240,845,4 1006,893,4 1137,943,4 1060,963,4 1489,771,4',
    r: '1557,721,4 1558,815,5 1421,820,4 929,915,4.500 1220,936,4.500 1463,958,4.500 1151,1034,4.500 1246,1142,5',
    p: '1561,909,4 1319,979,5 1532,1063,4.500 1310,1086,4 1094,1100,5 1484,1180,4.500 1245,1236,4.500 1126,1314,4 1419,1317,4.500' } }
];
const ORPHANS = [
  { x: 1080, y: 80, sx: 2.529, sy: 2.8, n: { g: '516,400,4 422,460,4 326,538,4 478,563,4 244,646,4 389,648,4' } },
  { x: 1080, y: 900, sx: 2.529, sy: 3, n: { g: '486,1026,4' } },
  { x: 1700, y: 620, sx: 2.529, sy: 2.119, n: {
    g: '1375,837,4 1304,945,4 1232,1056,4 858,1271,4 824,1361,4 697,1407,4 599,1454,4 471,1521,4',
    l: '1097,1188,4 968,1274,4 731,1311,4' } }
];
const CENTER = { x: 1436.8, y: 908.6 };
const HOT = { x: 1120, y: 620, sx: 2.529, sy: 3, n: {
  '#ff2312': '1134,222,4.500 1420,208,4 603,373,4.5 152,630,4.5 297,661,5 567,755,4.5 917,656,5.5 1005,802,4.5 454,931,4.5 1221,979,4.500 1059,1094,4 1181,1195,4 642,1189,4 1461,1410,12.300',
  '#ff7f7d': '723,132,4 910,562,4 1005,600,4.5 448,643,4 583,663,4 807,713,4 901,748,5 598,980,4 605,1074,4 371,1224,4.5 542,1230,5.500 845,1323,4 924,1330,4.5 955,1088,7.700 1114,1027,4 1214,1109,4',
  '#4300ff': '648,906,4 778,1012,9.700',
  '#b3b3b3': '508,1030,4' } };

function read(tile) {
  const out = [];
  for (const c in tile.n) for (const t of tile.n[c].split(' ')) {
    const [a, b, r] = t.split(',').map(Number);
    out.push({ x: tile.x + a / tile.sx, y: tile.y + b / tile.sy, r, c: COLORS[c] || c, k: c === 'k' });
  }
  return out;
}

let seed = 7;
const rnd = () => (seed = (seed * 16807) % 2147483647) / 2147483647;
const nodes = TILES.flatMap(read), loose = ORPHANS.flatMap(read), hot = read(HOT);
const line = (a, b, cls) => `<line class="${cls}" x1="${a.x.toFixed(1)}" y1="${a.y.toFixed(1)}" x2="${b.x.toFixed(1)}" y2="${b.y.toFixed(1)}"/>`;
const disc = n => `<circle cx="${n.x.toFixed(1)}" cy="${n.y.toFixed(1)}" r="${n.r}" fill="${n.c}"/>`;

// Links: every note ties to a few neighbours, larger notes to many and to some distant ones.
let faint = '';
const all = nodes.concat(hot);
for (const n of all) {
  if (n.k) {
    if (n.y > 1080) faint += line(n, { x: 1520, y: 1101 }, 'ln');
    continue;
  }
  const near = all.filter(m => m !== n && !m.k)
    .map(m => ({ m, d: Math.hypot(m.x - n.x, m.y - n.y) })).sort((p, q) => p.d - q.d);
  const reach = n.r >= 8 ? 38 : n.r >= 6.5 ? 16 : n.r >= 5 ? 7 : 3;
  const span = n.r >= 8 ? 80 : n.r >= 6.5 ? 50 : 24;
  for (let i = 0; i < reach; i++) faint += line(n, near[Math.floor(rnd() * span)].m, 'ln');
  if (n.r >= 5 && n.y < 1100 && rnd() < .75) faint += line(n, near[30 + Math.floor(rnd() * 110)].m, 'ln');
}
document.getElementById('graph').innerHTML =
  faint + nodes.concat(loose).map(disc).join('') +
  hot.map(n => line(CENTER, n, 'hot')).join('') + hot.map(disc).join('') +
  `<circle cx="${CENTER.x}" cy="${CENTER.y}" r="9.7" fill="#8a5cf0" stroke="#a68af9"/>`;
```
